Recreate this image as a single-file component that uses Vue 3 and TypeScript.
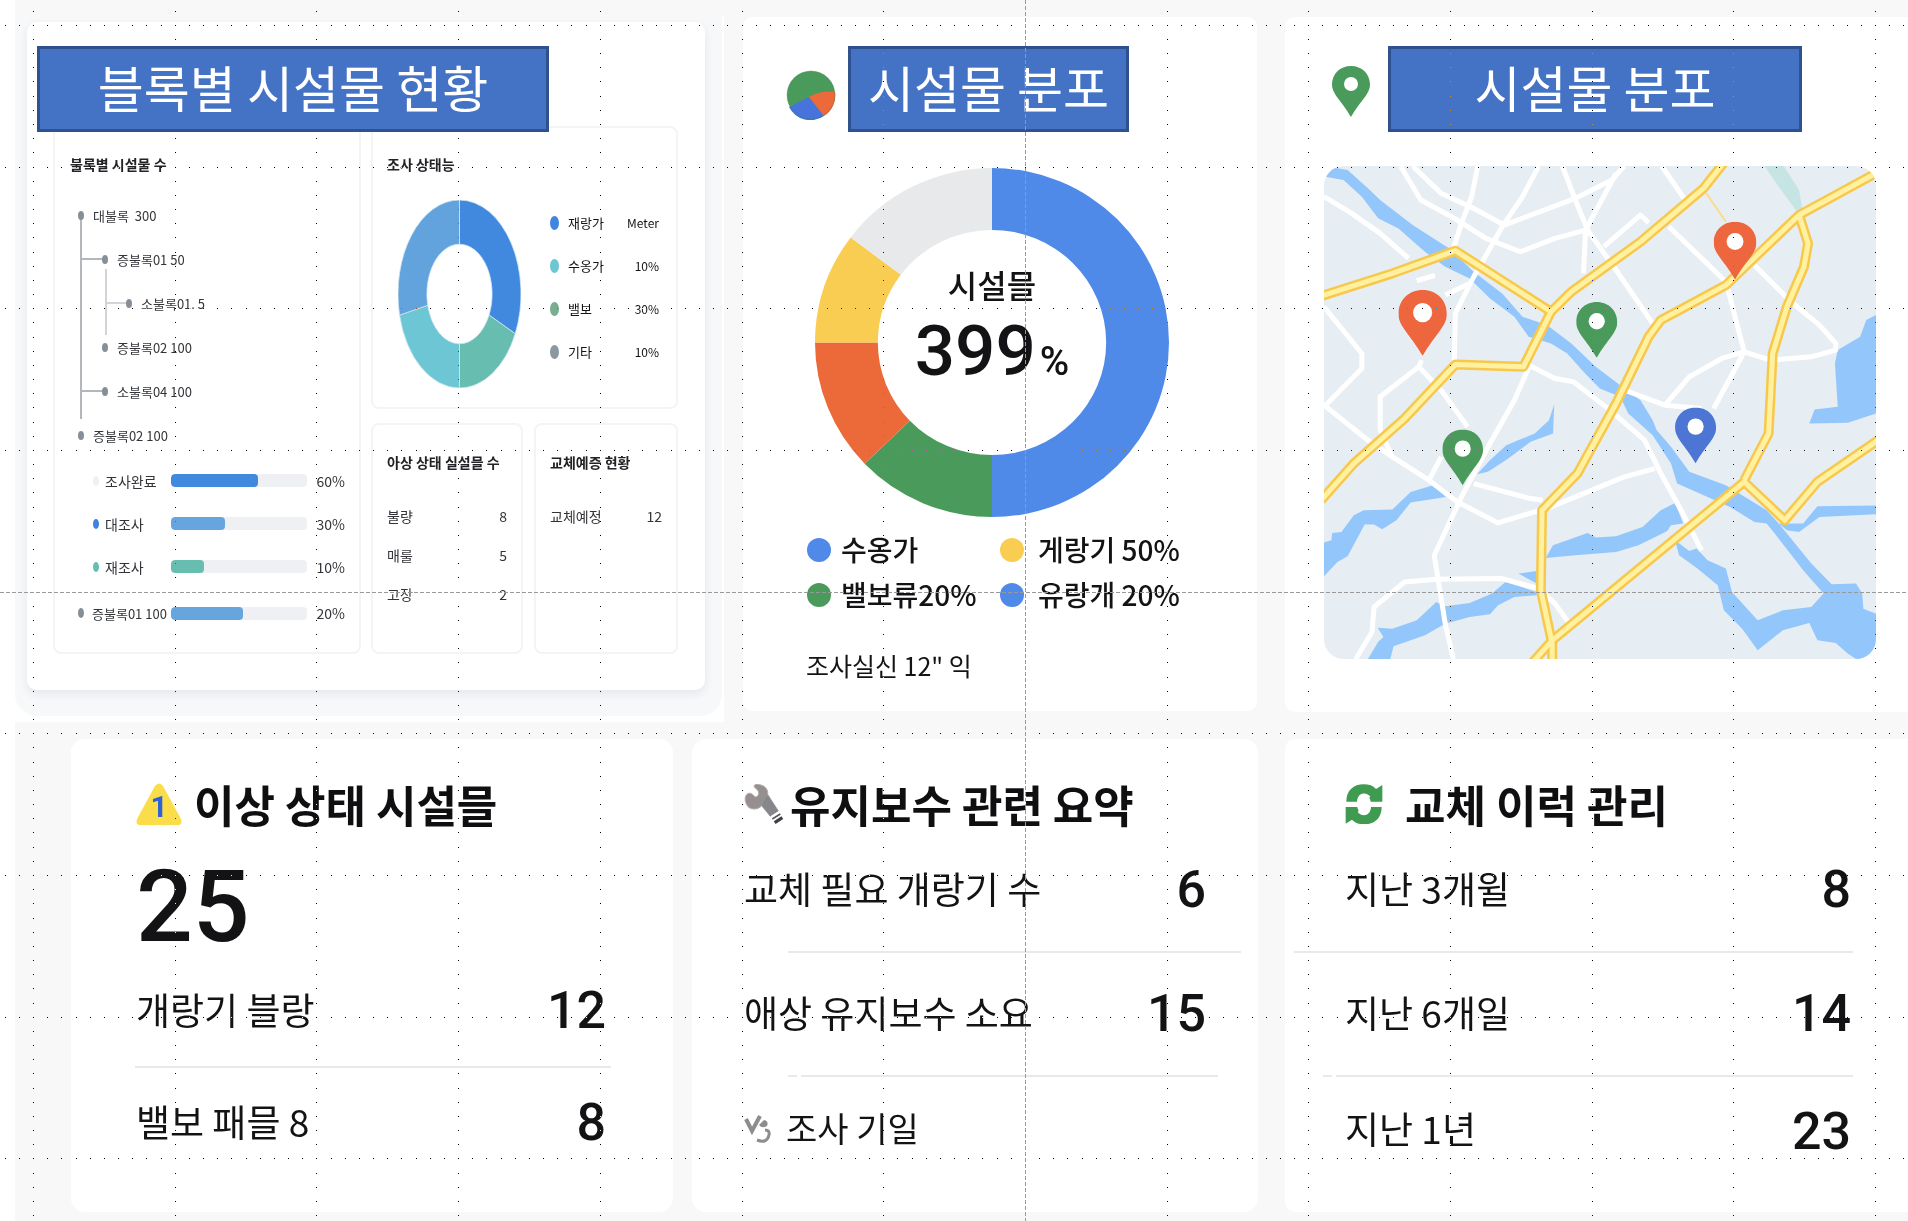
<script setup lang="ts">
interface TreeNode { label: string; level: number }
interface Progress { label: string; fill: number; value: string; dot: string; color: string; root?: boolean }
interface Slice { from: number; to: number; color: string }
interface Pin { x: number; y: number; w: number; h: number; color: string }

const tree: TreeNode[] = [
  { label: '대불록\u00a0 300', level: 0 },
  { label: '증불록01 50', level: 1 },
  { label: '소불록01. 5', level: 2 },
  { label: '증불록02 100', level: 1 },
  { label: '소불록04 100', level: 1 },
  { label: '증불록02 100', level: 0 },
]

const progress: Progress[] = [
  { label: '조사완료', fill: 64, value: '60%', dot: '#eff0f4', color: '#4189df' },
  { label: '대조사', fill: 40, value: '30%', dot: '#3f83e0', color: '#66a5dd' },
  { label: '재조사', fill: 24, value: '10%', dot: '#66bdb0', color: '#66bdb0' },
  { label: '증불록01 100', fill: 53, value: '20%', dot: '#868f98', color: '#66a5dd', root: true },
]

const surveyLegend = [
  { label: '재랑가', value: 'Meter', color: '#4086de' },
  { label: '수옹가', value: '10%', color: '#6dc6d4' },
  { label: '밸보', value: '30%', color: '#78ad90' },
  { label: '기타', value: '10%', color: '#8a98a2' },
]

const faults = [
  { label: '불량', value: '8' },
  { label: '매룰', value: '5' },
  { label: '고장', value: '2' },
]

const facilityLegend = [
  { label: '수옹가', color: '#4f8ae8' },
  { label: '게랑기 50%', color: '#f8cd52' },
  { label: '밸보류20%', color: '#4a9b5b' },
  { label: '유랑개 20%', color: '#4f8ae8' },
]

const surveySlices: Slice[] = [
  { from: 0, to: 115, color: '#4189df' },
  { from: 115, to: 180, color: '#66bdb0' },
  { from: 180, to: 257, color: '#6dc6d4' },
  { from: 257, to: 360, color: '#62a3dd' },
]

const facilitySlices: Slice[] = [
  { from: 0, to: 180, color: '#4f8ae8' },
  { from: 180, to: 226, color: '#4a9b5b' },
  { from: 226, to: 270, color: '#ec6a39' },
  { from: 270, to: 307, color: '#f8cd52' },
  { from: 307, to: 360, color: '#e8e9ea' },
]

function ring(s: Slice, inner: number): string {
  const p = (deg: number, r: number) => {
    const a = (deg * Math.PI) / 180
    return `${(100 + r * Math.sin(a)).toFixed(2)} ${(100 - r * Math.cos(a)).toFixed(2)}`
  }
  const large = s.to - s.from > 180 ? 1 : 0
  return `M${p(s.from, 100)}A100 100 0 ${large} 1 ${p(s.to, 100)}L${p(s.to, inner)}A${inner} ${inner} 0 ${large} 0 ${p(s.from, inner)}Z`
}

const water: string[] = [
  '135,530 150,502 190,510 240,565 270,600 350,675 440,745 500,815 570,880 620,950 680,975 740,1030 800,1100 860,1155 910,1200 940,1260 950,1290 985,1340 1030,1415 1120,1455 1220,1530 1250,1570 1270,1600 1330,1690 1380,1752 1440,1750 1455,1780 1458,1825 1489,1840 1489,1976 1440,1976 1420,1960 1390,1928 1345,1920 1325,1868 1260,1890 1198,1950 1160,1885 1115,1830 1100,1755 1050,1705 1005,1665 995,1620 1030,1652 1048,1645 1075,1680 1120,1705 1135,1775 1198,1860 1260,1830 1330,1820 1360,1780 1310,1710 1240,1600 1220,1570 1190,1565 1130,1520 1075,1490 1000,1450 985,1390 940,1305 880,1240 860,1190 810,1165 770,1115 730,1060 690,1030 635,1010 600,950 540,895 490,835 430,800 380,755 315,685 265,655 225,590 180,540',
  '1250,1570 1310,1570 1345,1518 1489,1516 1489,1542 1350,1550 1300,1595 1270,1590',
  '1489,945 1465,960 1450,1010 1395,1050 1388,1090 1395,1220 1338,1228 1325,1270 1420,1268 1489,1240',
  '698,1213 695,1300 640,1325 585,1375 535,1415 508,1422 540,1380 580,1335 650,1300 685,1260',
  '132,1627 150,1620 152,1598 175,1595 205,1545 230,1530 300,1528 345,1475 400,1455 432,1490 345,1507 310,1560 275,1587 255,1573 232,1573 190,1668 165,1685 132,1728',
  '677,1673 695,1635 780,1598 800,1612 850,1608 915,1580 960,1530 995,1508 1015,1570 985,1575 975,1593 905,1635 850,1655 750,1665',
  '240,1976 265,1925 278,1910 264,1882 300,1885 360,1860 408,1805 430,1818 490,1808 545,1780 578,1745 655,1775 655,1785 600,1790 560,1815 540,1842 490,1850 430,1870 380,1905 303,1938 295,1976',
  '610,1720 655,1712 655,1750',
]

const streets: string[] = [
  '132,590 200,640 270,700 340,775',
  '320,498 370,600 460,660 530,715 615,755 700,715 775,690',
  '350,498 420,580 500,625 575,675',
  '575,675 750,595 840,540 870,498',
  '660,498 620,590 570,680 540,745 500,830 455,940 452,1085',
  '510,498 495,590 470,670 450,745',
  '718,498 750,600 780,690 850,810 940,970',
  '850,520 775,690 770,820',
  '820,740 910,645 930,668',
  '962,498 1020,600',
  '980,680 1120,845 1165,1055 1090,1225',
  '1190,795 1280,905 1350,975 1390,1030 1390,1050 1330,1070 1230,1080 1165,1055 1110,1075 1030,1130 970,1215',
  '132,920 225,1060 225,1105 132,1220',
  '132,1215 240,1320 300,1370 390,1440 460,1505 560,1568 690,1520 870,1430 945,1405',
  '372,1080 365,1100 270,1190 270,1290 300,1370',
  '365,1100 420,1170 485,1280',
  '640,1090 600,1200 540,1330 470,1490 403,1665 430,1870 450,1976',
  '635,1095 700,1135 745,1145 830,1225 920,1320 960,1420 1010,1530 1060,1650',
  '860,1165 970,1215 1060,1225',
  '210,1976 250,1895 255,1820 330,1745 410,1737 570,1735 660,1765 700,1810 735,1870',
  '500,1450 640,1495 670,1500',
  '420,1370 390,1440',
  '430,885 490,850',
  '360,842 405,826',
]

const highways: string[] = [
  '120,890 300,820 455,752 690,935',
  '1115,488 1065,565 910,725 740,875 690,935 622,1100 455,1093 330,1255 205,1390 125,1500',
  '1500,512 1300,645 1120,855 960,960 930,1010 850,1210 755,1420 668,1530 665,1770 693,1930 693,1990',
  '1300,645 1322,730 1312,800 1270,920 1235,1060 1225,1300 1165,1440',
  '645,1986 693,1920 1165,1445 1265,1560 1345,1445 1500,1315',
]

const pins: Pin[] = [
  { x: 315, y: 870, w: 119, h: 197, color: '#ee663e' },
  { x: 1090, y: 665, w: 105, h: 173, color: '#ee663e' },
  { x: 752, y: 906, w: 101, h: 167, color: '#4a9b5b' },
  { x: 423, y: 1288, w: 100, h: 167, color: '#4a9b5b' },
  { x: 995, y: 1222, w: 101, h: 167, color: '#4c75d4' },
]

const pinPath = 'M19 0C8 0 0 8 0 18.500C0 28 9 34 19 51C29 34 38 28 38 18.500C38 8 30 0 19 0Z'

// Guide dots: lines every ten pitches, dots along them every pitch.
const pitch = 14.17
const originX = 33.5
const originY = 25.3
const cols = 14
const rows = 9
const at = (origin: number, n: number) => Math.floor(origin + n * pitch)
let guideDots = ''
for (let c = 0; c < cols; c++) {
  if (c === 7) continue
  for (let n = -1; n < 86; n++) {
    if (n % 10 !== 0) guideDots += `M${at(originX, c * 10)} ${at(originY, n)}h1v1h-1z`
  }
}
for (let r = 0; r < rows; r++) {
  if (r === 4) continue
  for (let n = -2; n < 134; n++) guideDots += `M${at(originX, n)} ${at(originY, r * 10)}h1v1h-1z`
}
</script>

<template>
  <main class="page">
    <div class="board">
      <div class="row-top">
        <section class="overview">
          <div class="overview-shade">
            <div class="overview-card">
              <h2 class="banner banner-wide">블록별 시설물 현황</h2>
              <div class="tiles">
                <div class="tile tile-tree">
                  <h3>불록별 시설물 수</h3>
                  <div class="tree-area">
                    <svg class="links" width="90" height="240" viewBox="0 0 90 240" aria-hidden="true">
                      <path d="M26 22V226M26 66H49M26 198H49" stroke="#b3b6ba" stroke-width="2" fill="none" />
                      <path d="M51 76V142M51 110H75" stroke="#d2d4d7" stroke-width="2" fill="none" />
                    </svg>
                    <ul class="tree">
                      <li v-for="(node, i) in tree" :key="i" :class="'level-' + node.level">
                        <span class="node"></span>{{ node.label }}
                      </li>
                    </ul>
                  </div>
                  <div v-for="p in progress" :key="p.label" class="progress" :class="{ root: p.root }">
                    <span class="progress-label"><i :style="{ background: p.dot }"></i>{{ p.label }}</span>
                    <span class="bar"><span :style="{ width: p.fill + '%', background: p.color }"></span></span>
                    <span class="percent">{{ p.value }}</span>
                  </div>
                </div>
                <div class="tile-side">
                  <div class="tile tile-status">
                    <h3>조사 상태능</h3>
                    <div class="status">
                      <svg class="small-donut" viewBox="0 0 200 200" preserveAspectRatio="none" role="img" aria-label="조사 상태능">
                        <path v-for="s in surveySlices" :key="s.from" :d="ring(s, 53)" :fill="s.color" stroke="#d5e6f2" stroke-width="1" />
                      </svg>
                      <ul class="status-legend">
                        <li v-for="l in surveyLegend" :key="l.label">
                          <i :style="{ background: l.color }"></i><span>{{ l.label }}</span><b>{{ l.value }}</b>
                        </li>
                      </ul>
                    </div>
                  </div>
                  <div class="tile-pair">
                    <div class="tile tile-list">
                      <h3>아상 상태 실설믈 수</h3>
                      <p v-for="f in faults" :key="f.label"><span>{{ f.label }}</span><span>{{ f.value }}</span></p>
                    </div>
                    <div class="tile tile-list">
                      <h3>교체예증 현황</h3>
                      <p><span>교체예정</span><span>12</span></p>
                    </div>
                  </div>
                </div>
              </div>
            </div>
          </div>
        </section>

        <section class="card facility">
          <header>
            <svg class="pie" width="50" height="50" viewBox="0 0 50 50" aria-hidden="true">
              <circle cx="25" cy="25" r="24" fill="#4a9b5b" />
              <path d="M23 27L3 37A24 24 0 0 0 38 46Z" fill="#4674dc" />
              <path d="M23 27L38 46A24 24 0 0 0 49 22C39 21 30 22 23 27Z" fill="#ec6a39" />
              <circle cx="25" cy="25" r="24" fill="none" stroke="#2d7a3a" stroke-opacity="0.300" />
            </svg>
            <h2 class="banner">시설물 분포</h2>
          </header>
          <div class="donut">
            <svg viewBox="0 0 200 200" preserveAspectRatio="none" role="img" aria-label="시설물 분포">
              <path v-for="s in facilitySlices" :key="s.from" :d="ring(s, 64.5)" :fill="s.color" />
            </svg>
            <div class="donut-text">
              <span class="donut-name">시설믈</span>
              <span class="donut-value">399<small>%</small></span>
            </div>
          </div>
          <ul class="legend">
            <li v-for="l in facilityLegend" :key="l.label"><i :style="{ background: l.color }"></i>{{ l.label }}</li>
          </ul>
          <p class="note">조사실신 12" 익</p>
        </section>

        <section class="card places">
          <header>
            <svg width="38" height="51" viewBox="0 0 38 51" aria-hidden="true">
              <path :d="pinPath" fill="#4a9b5b" />
              <ellipse cx="19" cy="18" rx="7" ry="7" fill="#fff" />
            </svg>
            <h2 class="banner">시설물 분포</h2>
          </header>
          <svg class="map" viewBox="132 498 1357 1478" preserveAspectRatio="none" role="img" aria-label="시설물 지도">
            <rect x="132" y="498" width="1357" height="1478" fill="#e6edf3" />
            <polygon points="1215,498 1262,498 1300,570 1308,630 1295,635 1250,560" fill="#c5e4e3" />
            <polygon v-for="w in water" :key="w" :points="w" fill="#93c7fb" />
            <polyline v-for="s in streets" :key="s" :points="s" class="street" />
            <polyline points="1072,580 1120,665" class="lane" />
            <polyline v-for="h in highways" :key="h" :points="h" class="highway-edge" />
            <polyline v-for="h in highways" :key="h" :points="h" class="highway" />
            <svg v-for="p in pins" :key="p.x" :x="p.x" :y="p.y" :width="p.w" :height="p.h" viewBox="0 0 38 51" preserveAspectRatio="none">
              <path :d="pinPath" :fill="p.color" />
              <ellipse cx="19" cy="17.500" rx="7.500" ry="7.500" fill="#fff" />
            </svg>
          </svg>
        </section>
      </div>

      <div class="row-bottom">
        <section class="card alerts">
          <h2 class="title">
            <svg width="46" height="42" viewBox="0 0 46 42" aria-hidden="true">
              <path d="M19 3Q23 -2 27 3L45 36Q47 42 41 42H5Q-1 42 1 36Z" fill="#fbdc49" />
              <text x="23" y="34" text-anchor="middle" class="mark">1</text>
            </svg>
            이상 상태 시설믈
          </h2>
          <p class="total">25</p>
          <p class="line"><span>개랑기 블랑</span><b>12</b></p>
          <hr />
          <p class="line"><span>밸보 패믈 8</span><b>8</b></p>
        </section>

        <section class="card upkeep">
          <h2 class="title">
            <svg width="40" height="41" viewBox="33 27 120 123" aria-hidden="true">
              <path d="M64 36C62 28 70 26 80 29C96 32 106 44 104 58L136 108L112 124L86 92C76 104 54 106 44 94C34 80 34 62 44 56C52 52 60 58 66 66C76 66 80 54 74 46Z" fill="#968f90" stroke="#b3adad" stroke-width="3" />
              <path d="M104 60L136 108L112 124L86 92Z" fill="#86878c" />
              <path d="M114 126L138 111" stroke="#fff" stroke-width="5" />
              <path d="M118 132L142 117" stroke="#55565b" stroke-width="5" />
              <path d="M121 137L145 122" stroke="#fff" stroke-width="4" />
              <path d="M125 143L148 128" stroke="#3f4045" stroke-width="10" />
            </svg>
            유지보수 관련 요약
          </h2>
          <p class="line"><span>교체 필요 개랑기 수</span><b>6</b></p>
          <hr />
          <p class="line"><span>애상 유지보수 소요</span><b>15</b></p>
          <hr class="split" />
          <p class="line last">
            <span class="with-icon">
              <svg width="27" height="31" viewBox="0 0 27 31" aria-hidden="true">
                <path d="M2 6L8 18L16 3" fill="none" stroke="#8d8d8d" stroke-width="4" />
                <path d="M15 12L20 7Q25 8 23 13Q18 16 15 12Z" fill="#8d8d8d" />
                <path d="M21 17Q26 17 25 22Q23 31 13 27" fill="none" stroke="#8d8d8d" stroke-width="3" />
              </svg>
              조사 기일
            </span>
          </p>
        </section>

        <section class="card history">
          <h2 class="title">
            <svg width="38" height="40" viewBox="27 17 112 120" aria-hidden="true">
              <g fill="#3f9b4f">
                <path d="M30 70C30 36 52 18 82 18C98 18 110 22 119 32L138 20V70H90V66L102 55C94 42 64 38 62 70Z" />
                <path d="M30 70C30 36 52 18 82 18C98 18 110 22 119 32L138 20V70H90V66L102 55C94 42 64 38 62 70Z" transform="rotate(180 83 78)" />
              </g>
              <ellipse cx="83" cy="78" rx="21" ry="31" fill="#fff" />
            </svg>
            교체 이럭 관리
          </h2>
          <p class="line"><span>지난 3개윌</span><b>8</b></p>
          <hr />
          <p class="line"><span>지난 6개일</span><b>14</b></p>
          <hr class="split" />
          <p class="line last"><span>지난 1년</span><b>23</b></p>
        </section>
      </div>
    </div>

    <svg class="guides guides-dots" aria-hidden="true"><path :d="guideDots" fill="#fff" /></svg>
    <svg class="guides" aria-hidden="true">
      <g stroke="#999" stroke-width="1" stroke-dasharray="4 2" shape-rendering="crispEdges">
        <line x1="0" y1="592.5" x2="100%" y2="592.5" />
        <line x1="1025.5" y1="0" x2="1025.5" y2="100%" />
      </g>
    </svg>
  </main>
</template>

<style>
body {
  margin: 0;
  background: #fff;
}
</style>

<style scoped>
.page {
  position: relative;
  overflow: hidden;
  isolation: isolate;
  background: #fff;
  color: #131315;
  font-family: "Noto Sans CJK KR", "Noto Sans", sans-serif;
}
h2, h3, p, ul { margin: 0; padding: 0; }
ul { list-style: none; }
i { font-style: normal; border-radius: 50%; flex: none; }
svg { display: block; flex: none; }

.board { margin-left: 15px; padding: 17px 0 9px; background: #f8f8f8; }
.row-top {
  display: grid;
  grid-template-columns: minmax(0, 728fr) minmax(0, 542fr) minmax(0, 623fr);
  align-items: start;
  margin-bottom: 17px;
}
.row-bottom {
  display: grid;
  grid-template-columns: minmax(0, 677fr) minmax(0, 593fr) minmax(0, 623fr);
}
.card { background: #fff; border-radius: 10px; box-sizing: border-box; }

.banner {
  box-sizing: border-box;
  height: 86px;
  border: 3px solid #2f528f;
  background: #4472c4;
  color: #fff;
  font-size: 50px;
  font-weight: 400;
  line-height: 75px;
  text-align: center;
  white-space: nowrap;
}

.overview { background: #fff; margin-right: 19px; padding: 0 2px 6px 0; }
.overview-shade { background: #f6f8fa; border-radius: 0 0 22px 22px; padding: 5px 17px 26px 12px; }
.overview-card {
  background: #fff;
  border-radius: 10px;
  padding: 24px 27px 36px 26px;
  box-shadow: 0 4px 10px rgba(40, 50, 60, 0.08);
}
.banner-wide { position: relative; z-index: 1; width: 512px; margin-left: -16px; }
.tiles { display: grid; grid-template-columns: minmax(0, 308fr) minmax(0, 307fr); gap: 10px; margin-top: -6px; height: 528px; }
.tile { box-sizing: border-box; border: 2px solid #f3f4f5; border-radius: 8px; }
.tile h3 { font-size: 14px; line-height: 30px; font-weight: 700; white-space: nowrap; color: #222326; }
.tile-tree { padding: 21px 14px 0 0; }
.tile-tree h3 { margin: 0 0 14px 15px; }
.tile-side { display: flex; flex-direction: column; gap: 14px; }
.tile-status { height: 283px; padding: 21px 17px 0 14px; }
.tile-pair { flex: 1; display: grid; grid-template-columns: minmax(0, 152fr) minmax(0, 144fr); gap: 11px; }
.tile-list { padding: 22px 14px 0 14px; }
.tile-list h3 { margin-bottom: 20px; }
.tile-list p { display: flex; justify-content: space-between; font-size: 14px; line-height: 39px; color: #333438; }

.tree-area { position: relative; margin-bottom: 2px; }
.links { position: absolute; left: 0; top: 0; }
.tree li { position: relative; display: flex; align-items: center; gap: 9px; height: 44px; font-size: 13px; color: #333438; white-space: nowrap; }
.level-0 { padding-left: 23px; }
.level-1 { padding-left: 47px; }
.level-2 { padding-left: 71px; }
.node { width: 6px; height: 9px; border-radius: 50%; background: #868f98; }

.progress { display: grid; grid-template-columns: 116px 1fr 38px; align-items: center; height: 43px; font-size: 14px; color: #333438; white-space: nowrap; }
.progress.root { height: 50px; font-size: 13px; }
.progress-label { display: flex; align-items: center; gap: 6px; padding-left: 38px; }
.progress-label i { width: 6px; height: 10px; }
.root .progress-label { padding-left: 23px; gap: 8px; }
.bar { height: 13px; border-radius: 4px; background: #eff0f4; overflow: hidden; }
.bar span { display: block; height: 100%; border-radius: 4px; }
.percent { font-size: 14px; text-align: right; }

.status { display: flex; align-items: flex-start; margin-top: 21px; }
.small-donut { width: 123px; height: 188px; margin-left: 11px; }
.status-legend { flex: 1; margin: 1px 0 0 29px; }
.status-legend li { display: flex; align-items: center; height: 43px; font-size: 13px; white-space: nowrap; }
.status-legend i { width: 9px; height: 14px; margin-right: 9px; }
.status-legend b { margin-left: auto; font-weight: 400; font-size: 12px; }

.facility { margin-right: 28px; padding: 29px 0 28px; }
.facility header { display: flex; align-items: center; gap: 12px; padding-left: 43px; }
.facility .pie { margin-top: 11px; }
.facility .banner { width: 281px; }
.donut { position: relative; width: 354px; height: 349px; margin: 36px 0 10px 72px; }
.donut > svg { width: 100%; height: 100%; }
.donut-text { position: absolute; inset: 0; padding-bottom: 17px; display: flex; flex-direction: column; align-items: center; justify-content: center; }
.donut-name { font-size: 32px; font-weight: 500; line-height: 44px; }
.donut-value { font-family: Roboto, sans-serif; font-weight: 500; font-size: 71px; line-height: 90px; }
.donut-value small { font-size: 40px; margin-left: 4px; }
.legend { display: grid; grid-template-columns: 193px 1fr; padding-left: 64px; }
.legend li { display: flex; align-items: center; gap: 10px; height: 45px; font-size: 28px; line-height: 45px; font-weight: 500; white-space: nowrap; }
.legend li:nth-child(even) { gap: 14px; }
.legend i { width: 24px; height: 24px; }
.note { margin: 30px 0 0 63px; font-size: 25px; line-height: 36px; }

.places { padding: 29px 32px 53px 39px; border-radius: 10px 0 0 10px; }
.places header { display: flex; align-items: center; gap: 18px; padding-left: 8px; }
.places header svg { margin-top: 5px; }
.places .banner { width: 414px; }
.map { width: 100%; height: 493px; margin-top: 34px; border-radius: 20px; }
.map polyline { fill: none; vector-effect: non-scaling-stroke; stroke-linejoin: round; }
.street { stroke: #fff; stroke-width: 5px; }
.lane { stroke: #fbdc8c; stroke-width: 2px; }
.highway-edge { stroke: #f8c84c; stroke-width: 10px; }
.highway { stroke: #fff1a0; stroke-width: 5px; }

.row-bottom .card { height: 473px; border-radius: 14px; }
.title { display: flex; align-items: center; height: 50px; font-size: 44px; line-height: 50px; font-weight: 700; white-space: nowrap; color: #0f0f11; }
.mark { font: 700 30px Roboto, sans-serif; fill: #2c62d6; }
.line { display: flex; align-items: center; justify-content: space-between; height: 122px; font-size: 37px; line-height: 50px; white-space: nowrap; }
.line > span { padding-bottom: 4px; }
.line b { font-family: Roboto, sans-serif; font-weight: 500; font-size: 52px; }
.line.last { height: 110px; }
.last > span { padding-bottom: 8px; }
hr { height: 2px; margin: 0; border: 0; background: #e9e9ea; }

.alerts { margin: 0 19px 0 56px; padding: 40px 67px 0 65px; }
.alerts .title { gap: 12px; }
.total { height: 98px; padding-top: 29px; font-family: Roboto, sans-serif; font-weight: 500; font-size: 100px; line-height: 98px; }
.alerts .line { height: 110px; }
.alerts hr { margin: 0 -5px 0 -1px; }

.upkeep { margin-right: 27px; padding: 40px 52px 0; }
.upkeep .title { gap: 6px; }
.upkeep hr { margin: 0 -35px 0 44px; }
.upkeep hr.split { margin: 0 -12px 0 44px; }
.with-icon { display: flex; align-items: center; gap: 15px; font-size: 34px; }

.history { padding: 40px 57px 0 60px; }
.row-bottom .history { border-radius: 10px 0 0 10px; }
.history .title { gap: 22px; }
.history hr { margin: 0 -2px 0 -51px; }
.history hr.split { margin-left: -22px; }
hr.split { background: linear-gradient(90deg, #e9e9ea 9px, #fff 9px 13px, #e9e9ea 13px); }

.guides { position: absolute; left: 0; top: 0; width: 100%; height: 100%; pointer-events: none; }
.guides-dots { mix-blend-mode: difference; }
</style>
